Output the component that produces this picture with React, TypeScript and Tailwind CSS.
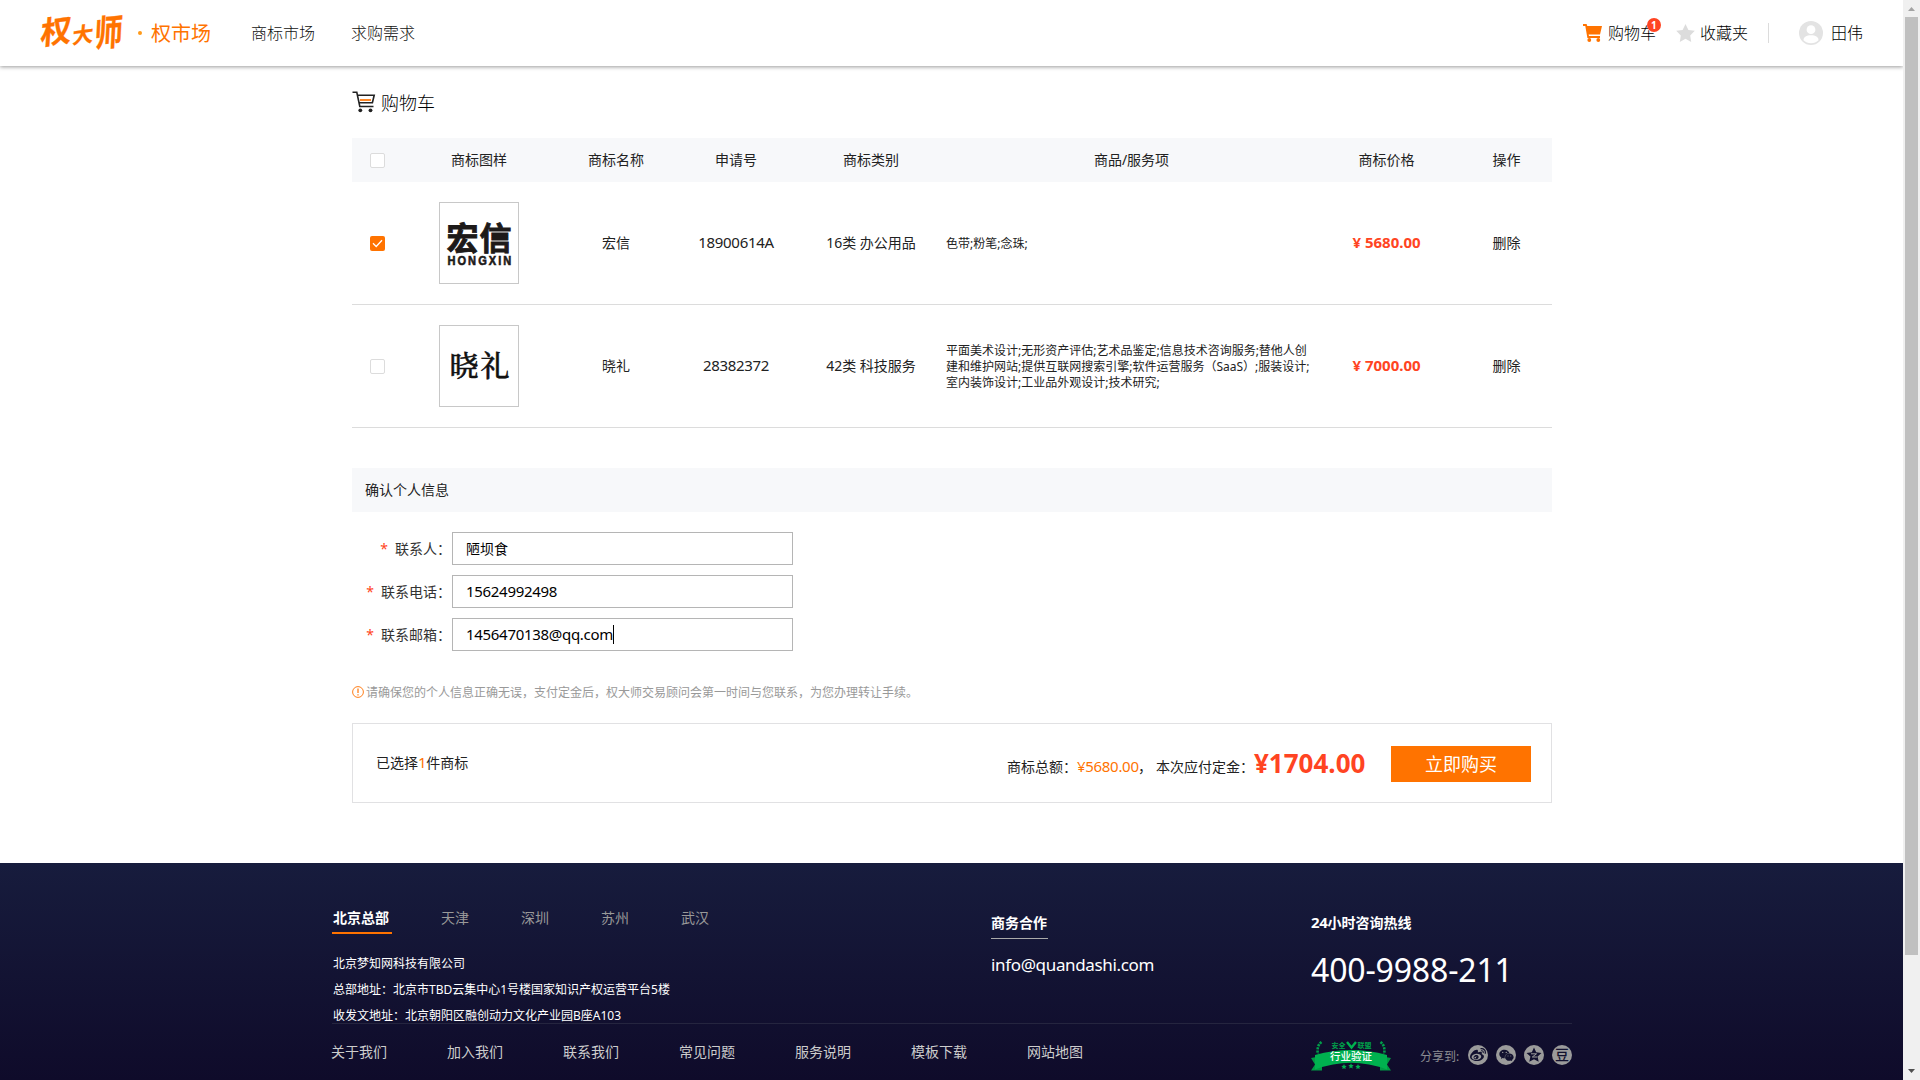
import React from "react";
import { FaWeibo, FaWeixin } from "react-icons/fa";

const COLS = "grid grid-cols-[50px_154px_120px_120px_150px_371px_139px_96px] items-center";

/* Latin digits and letters, drawn a step larger than the 14px Chinese text */
function L({ children }: { children: React.ReactNode }) {
  return <span className="text-[15px] leading-none tracking-[-0.02em]">{children}</span>;
}

function BrushLogo() {
  return (
    <svg width="84" height="48" viewBox="0 0 84 48" overflow="visible" fill="#ff7300" stroke="#ff7300" strokeWidth="0.3" fontFamily="'Noto Sans CJK SC', sans-serif" fontWeight="700">
      <text transform="translate(0 36) rotate(-8) skewX(-12)" fontSize="31">权</text>
      <text transform="translate(32 35) rotate(-8) skewX(-12)" fontSize="21">大</text>
      <text transform="translate(54 38) rotate(-5) skewX(-8) scale(0.94 1.2)" fontSize="30">师</text>
    </svg>
  );
}

function CartSolid() {
  return (
    <svg width="20" height="18" viewBox="0 0 20 18" fill="#ff7300">
      <path d="M0 0h3.600l.7 2H19l-2 8.400H5.600l.4 1.700h11v1.900H4.400L2.300 1.900H0z" />
      <circle cx="6.300" cy="16" r="1.900" />
      <circle cx="15.300" cy="16" r="1.900" />
    </svg>
  );
}

function CartOutline() {
  return (
    <svg width="24" height="22" viewBox="0 0 24 22" fill="none" stroke="#222" strokeWidth="1.600">
      <path d="M.5 1.300h4.300l3 14.200h13.700M5.600 4.300h16.600l-1.800 7.500H7.200" />
      <path d="M8 9h11" stroke="#ff7300" strokeWidth="1.700" />
      <circle cx="8.300" cy="19.300" r="1.900" fill="#222" stroke="none" />
      <circle cx="18.500" cy="19.300" r="1.900" fill="#222" stroke="none" />
    </svg>
  );
}

function Check({ on = false }: { on?: boolean }) {
  return on ? (
    <span className="flex h-[15px] w-[15px] items-center justify-center rounded-[2px] bg-[#ff7300]">
      <svg width="11" height="9" viewBox="0 0 11 9" fill="none" stroke="#fff" strokeWidth="1.300">
        <path d="M1 4.300l3.200 3.200L10 1.200" />
      </svg>
    </span>
  ) : (
    <span className="h-[15px] w-[15px] rounded-[2px] border border-[#dcdcdc] bg-white" />
  );
}

function HongxinMark() {
  return (
    <svg width="78" height="80" viewBox="0 0 78 80" fill="#1d1a19" fontFamily="'Noto Sans CJK SC', sans-serif" fontWeight="700">
      <text x="6.500" y="46.500" fontSize="32" textLength="65" stroke="#1d1a19" strokeWidth=".9">宏信</text>
      <text transform="translate(7.500 61.500) scale(0.85 1)" fontSize="13" fontFamily="'Liberation Sans', sans-serif" textLength="75" stroke="#1d1a19" strokeWidth=".6">HONGXIN</text>
    </svg>
  );
}

function XiaoliMark() {
  return (
    <svg width="78" height="80" viewBox="0 0 78 80" fill="#111" fontFamily="'Noto Serif CJK SC', 'Noto Sans CJK SC', serif" fontWeight="500">
      <text x="9.500" y="51" fontSize="29" textLength="60" stroke="#111" strokeWidth=".5">晓礼</text>
    </svg>
  );
}

function Row(p: { on?: boolean; mark: React.ReactNode; name: string; no: string; cls: React.ReactNode; items: React.ReactNode; price: string }) {
  return (
    <div className={`${COLS} h-[123px] border-b border-[#dcdcdc] text-center text-[14px] leading-[20px]`}>
      <div className="flex justify-center pt-px"><Check on={p.on} /></div>
      <div className="flex justify-center"><div className="h-[82px] w-[80px] border border-[#c8c8c8]">{p.mark}</div></div>
      <div>{p.name}</div>
      <div><L>{p.no}</L></div>
      <div>{p.cls}</div>
      <div className="whitespace-nowrap pt-px text-left text-[12px] leading-[16px]">{p.items}</div>
      <div className="pb-[2px] text-[15px] font-bold text-[#ff4422]">¥ {p.price}</div>
      <div className="pl-[5px]">删除</div>
    </div>
  );
}

function Field({ label, value, caret = false }: { label: string; value: React.ReactNode; caret?: boolean }) {
  return (
    <div className="flex h-[33px] items-center">
      <div className="flex w-[99px] justify-end whitespace-nowrap text-[14px] leading-[20px] text-[#333]">
        <span className="mr-[7px] text-[#ff4422]">*</span>
        {label}
      </div>
      <div className="ml-px flex h-[33px] w-[341px] items-center border border-[#b5b5b5] pl-[13px] text-[14px] leading-[20px] text-black">
        <span>{value}</span>
        {caret && <span className="h-[19px] w-px bg-black" />}
      </div>
    </div>
  );
}

function Ribbon() {
  return (
    <svg width="80" height="31" viewBox="0 0 80 31" overflow="visible" fontFamily="'Noto Sans CJK SC', sans-serif">
      <path d="M0 17l11-2v14.500H0l4-6zM80 17l-11-2v14.500h11l-4-6z" fill="#009a44" />
      <path d="M4 14Q40 4 76 14V28.500Q40 15 4 28.500z" fill="#00b14f" />
      <text x="20.500" y="7" fontSize="7" fontWeight="700" fill="#00a04a">安全</text>
      <text x="46.500" y="7" fontSize="7" fontWeight="700" fill="#00a04a">联盟</text>
      <path d="M36 1l4.500 5.500L45 1" fill="none" stroke="#00b14f" strokeWidth="2.400" />
      <g fill="none" stroke="#00a04a" strokeWidth="2.600" strokeDasharray="2.200 1">
        <path d="M10.500 1C6.500 4 6 9 7 13" />
        <path d="M69.500 1C73.500 4 74 9 73 13" />
      </g>
      <text x="19" y="18.500" fontSize="10.500" fill="#fff" fontWeight="500">行业验证</text>
      <g fill="#00b14f">
        <path d="M33 23l.8 1.700 1.900.2-1.400 1.300.4 1.900-1.700-.9-1.700.9.4-1.900-1.400-1.300 1.900-.2z" />
        <path d="M40 22.300l.8 1.700 1.900.2-1.400 1.300.4 1.900-1.700-.9-1.700.9.4-1.900-1.400-1.300 1.900-.2z" />
        <path d="M47 23l.8 1.700 1.900.2-1.400 1.300.4 1.900-1.700-.9-1.700.9.4-1.900-1.400-1.300 1.900-.2z" />
      </g>
    </svg>
  );
}

function Dot({ children }: { children: React.ReactNode }) {
  return <span className="flex h-[20px] w-[20px] items-center justify-center overflow-hidden rounded-full bg-[#9b9b9b] text-[#12112f]">{children}</span>;
}

const LINKS = ["关于我们", "加入我们", "联系我们", "常见问题", "服务说明", "模板下载", "网站地图"];

export default function App() {
  return (
    <div className="flex h-[1080px] w-[1920px] overflow-hidden bg-white font-['Noto_Sans','Noto_Sans_CJK_SC',sans-serif] text-[#222]">
      <div className="flex w-[1903px] flex-col">
        <header className="flex h-[66px] shrink-0 items-center bg-white text-[16px] font-light leading-[24px] text-[#111] shadow-[0_1px_4px_rgba(0,0,0,0.4)]">
          <div className="ml-[40px] flex w-[211px] items-center">
            <BrushLogo />
            <span className="ml-[14px] h-1 w-1 rounded-full bg-[#ff9a1a]" />
            <span className="ml-[9px] mt-[2px] text-[20px] font-normal text-[#ff7300]">权市场</span>
          </div>
          <span>商标市场</span>
          <span className="ml-[36px]">求购需求</span>
          <div className="ml-auto flex items-center pr-[40px] text-black">
            <CartSolid />
            <span className="relative ml-[5px]">
              购物车
              <span className="absolute -top-[3px] left-[39px] flex h-[14px] w-[14px] items-center justify-center rounded-full bg-[#ff4422] text-[10px] font-bold leading-none text-white">1</span>
            </span>
            <svg className="ml-[20px]" width="19" height="18" viewBox="0 0 19 18" fill="#dcdcdc"><path d="M9.500 0l2.900 5.900 6.400.9-4.600 4.600 1 6.500-5.700-3.100-5.700 3.100 1-6.500L.2 6.800l6.400-.9z" /></svg>
            <span className="ml-[5px]">收藏夹</span>
            <span className="ml-[20px] h-[20px] w-px bg-[#dcdcdc]" />
            <svg className="ml-[30px]" width="24" height="24" viewBox="0 0 24 24">
              <circle cx="12" cy="12" r="12" fill="#e3e3e3" />
              <circle cx="12" cy="8.700" r="4.400" fill="#fff" />
              <path d="M4.500 19.300c0-3.200 3-5 7.500-5s7.500 1.800 7.500 5c-2 1.800-4.500 2.900-7.500 2.900s-5.500-1.100-7.500-2.900z" fill="#fff" />
            </svg>
            <span className="ml-[8px]">田伟</span>
          </div>
        </header>

        <main className="ml-[352px] w-[1200px]">
          <div className="flex h-[72px] items-center text-[18px] font-light text-black">
            <CartOutline />
            <span className="ml-[5px] mt-[2px] leading-[26px]">购物车</span>
          </div>
          <div className={`${COLS} h-[44px] bg-[#f7f8fa] text-center text-[14px] leading-[20px]`}>
            <div className="flex justify-center pt-px"><Check /></div>
            <div>商标图样</div>
            <div>商标名称</div>
            <div>申请号</div>
            <div>商标类别</div>
            <div>商品/服务项</div>
            <div>商标价格</div>
            <div className="pl-[5px]">操作</div>
          </div>
          <Row on mark={<HongxinMark />} name="宏信" no="18900614A" cls="16类 办公用品" items="色带;粉笔;念珠;" price="5680.00" />
          <Row
            mark={<XiaoliMark />}
            name="晓礼"
            no="28382372"
            cls="42类 科技服务"
            items={
              <>
                平面美术设计;无形资产评估;艺术品鉴定;信息技术咨询服务;替他人创<br />
                建和维护网站;提供互联网搜索引擎;软件运营服务（SaaS）;服装设计;<br />
                室内装饰设计;工业品外观设计;技术研究;
              </>
            }
            price="7000.00"
          />

          <div className="mt-[40px] flex h-[44px] items-center bg-[#f7f8fa] pl-[13px] text-[14px] leading-[20px]">确认个人信息</div>
          <div className="mt-[20px] flex flex-col gap-[10px]">
            <Field label="联系人：" value="陋坝食" />
            <Field label="联系电话：" value={<L>15624992498</L>} />
            <Field label="联系邮箱：" value={<L>1456470138@qq.com</L>} caret />
          </div>
          <div className="mt-[33px] flex h-[16px] items-center text-[12px] leading-[16px] text-[#999]">
            <svg width="12" height="12" viewBox="0 0 12 12" fill="none" stroke="#ff7f1a" strokeWidth="1"><circle cx="6" cy="6" r="5.400" /><path d="M6 2.500v4.500M6 8.200v1.400" strokeWidth="1.300" /></svg>
            <span className="ml-[2px] mt-[2px]">请确保您的个人信息正确无误，支付定金后，权大师交易顾问会第一时间与您联系，为您办理转让手续。</span>
          </div>
          <div className="mt-[23px] flex h-[80px] items-center whitespace-nowrap border border-[#e1e1e3] pl-[23px] pr-[20px] text-[14px] leading-[20px]">
            <span>已选择<span className="text-[#ff7300]"><L>1</L></span>件商标</span>
            <div className="ml-auto flex items-center">
              <span className="mt-[8px]">商标总额：</span>
              <span className="mt-[8px] w-[61px] text-[#ff7300]"><L>¥5680.00</L></span>
              <span className="mt-[8px] w-[18px]">，</span>
              <span className="mt-[8px] w-[98px]">本次应付定金：</span>
              <span className="mb-px w-[110px] text-[26px] font-bold leading-[32px] text-[#ff4422]">¥1704.00</span>
              <span className="ml-[27px] mt-[2px] flex h-[36px] w-[140px] items-center justify-center bg-[#ff7300] text-[18px] text-white">立即购买</span>
            </div>
          </div>
        </main>

        <footer className="mt-[60px] h-[217px] shrink-0 bg-linear-to-b from-[#171c3d] to-[#0f0b2a] pl-[332px] text-white">
          <div className="flex h-[161px] w-[1240px] border-b border-[#25253f]">
            <div className="w-[659px] pt-[43px]">
              <div className="flex text-[14px] leading-[24px] text-[#999]">
                <span className="mr-[49px] h-[28px] w-[60px] border-b-2 border-[#ff7300] pl-[1px] font-bold text-white">北京总部</span>
                <span className="w-[80px]">天津</span>
                <span className="w-[80px]">深圳</span>
                <span className="w-[80px]">苏州</span>
                <span>武汉</span>
              </div>
              <div className="mt-[17px] pl-[1px] text-[12px] leading-[26px]">
                <p>北京梦知网科技有限公司</p>
                <p>总部地址：北京市TBD云集中心1号楼国家知识产权运营平台5楼</p>
                <p>收发文地址：北京朝阳区融创动力文化产业园B座A103</p>
              </div>
            </div>
            <div className="w-[320px] pt-[48px]">
              <div className="h-[28px] w-[57px] border-b border-[#aaa] text-[14px] font-bold leading-[24px]">商务合作</div>
              <div className="mt-[14px] text-[17px] leading-[24px] tracking-[-0.02em]">info@quandashi.com</div>
            </div>
            <div className="pt-[48px]">
              <div className="text-[14px] font-bold leading-[24px]"><L>24</L>小时咨询热线</div>
              <div className="mt-[13px] text-[32px] leading-[44px] tracking-[-0.005em]">400-9988-211</div>
            </div>
          </div>
          <div className="flex h-[56px] w-[1240px] items-center text-[14px] leading-[20px] text-[#ccc]">
            <div className="-ml-px flex w-[980px]">
              {LINKS.map((t) => <span key={t} className="w-[116px]">{t}</span>)}
            </div>
            <div className="mt-[8px]"><Ribbon /></div>
            <div className="ml-[29px] mt-[10px] w-[48px] whitespace-nowrap text-[12px] text-[#8c8c92]">分享到:</div>
            <div className="mt-[6px] flex gap-[8px]">
              <Dot><FaWeibo size={16} /></Dot>
              <Dot><FaWeixin size={15} /></Dot>
              <Dot>
                <svg width="16" height="16" viewBox="0 0 16 16"><path d="M8 .5l2.200 4.800 5.300.6-3.900 3.600 1.100 5.300L8 12.200l-4.700 2.600 1.100-5.300L.5 5.900l5.300-.6z" fill="#12112f" /><path d="M5 6.800h5.500L6.300 10h5" stroke="#9b9b9b" strokeWidth="1" fill="none" /></svg>
              </Dot>
              <Dot><span className="text-[14px] font-medium leading-[20px]">豆</span></Dot>
            </div>
          </div>
        </footer>
      </div>

      <div className="flex w-[17px] flex-col items-center bg-[#f0f0f0]">
        <svg className="shrink-0" width="17" height="17" viewBox="0 0 17 17"><path d="M5 11l3.500-4 3.500 4z" fill="#a3a3a3" /></svg>
        <div className="h-[938px] w-[13px] bg-[#c0c0c0]" />
        <svg className="mt-auto shrink-0" width="17" height="17" viewBox="0 0 17 17"><path d="M5 6l3.500 4L12 6z" fill="#505050" /></svg>
      </div>
    </div>
  );
}
